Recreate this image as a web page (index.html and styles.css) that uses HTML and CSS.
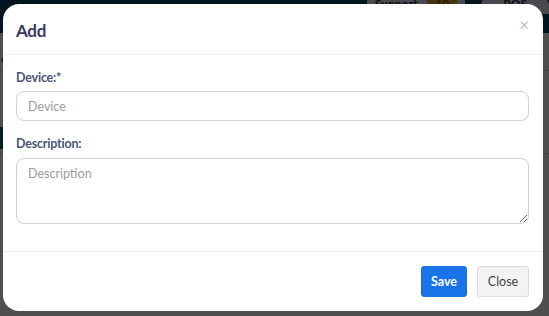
FILE: index.html
```html
<!DOCTYPE html>
<html>
<head>
<meta charset="utf-8">
<link rel="stylesheet" href="styles.css">
</head>
<body>
<div class="page">
  <div class="topbar">
    <div class="spacer"></div>
    <div class="support">Support <span class="badge">10</span></div>
    <div class="pos">POS</div>
  </div>
  <div class="content">
    <div class="crumb">c</div>
    <div class="rule"></div>
    <div class="band"></div>
    <div class="rule2"></div>
  </div>
</div>
<div class="overlay"></div>
<div class="modal">
  <div class="modal-header">
    <h2 class="title">Add</h2>
    <span class="close-x">&times;</span>
  </div>
  <div class="modal-body">
    <label class="label">Device:*</label>
    <input class="field" type="text" placeholder="Device">
    <label class="label label-gap">Description:</label>
    <textarea class="field area" placeholder="Description"></textarea>
  </div>
  <div class="modal-footer">
    <button class="btn btn-save">Save</button>
    <button class="btn btn-close">Close</button>
  </div>
</div>
</body>
</html>
```
FILE: styles.css
```css
* { box-sizing: border-box; }
html, body { margin: 0; padding: 0; }
body {
  width: 549px;
  height: 316px;
  overflow: hidden;
  font-family: Lato, "Liberation Sans", sans-serif;
  background: #ffffff;
  position: relative;
}
.page { width: 549px; height: 316px; background: #f4f4f4; }
.topbar {
  height: 33px;
  background: #0a4262;
  display: flex;
  align-items: flex-start;
  font-size: 12px;
  font-weight: 700;
  color: #1c2a44;
}
.spacer { flex: 1; }
.support {
  background: #dfe6ee;
  border-radius: 6px;
  padding: 0 8px;
  height: 18px;
  margin-top: -4px;
  line-height: 16px;
  margin-right: 16px;
  display: flex;
  gap: 10px;
}
.badge { background: #d6a52a; color: #7a5208; padding: 0 8px; border-radius: 4px; }
.pos { background: #dfe6ee; border-radius: 10px 10px 0 0; padding: 0 22px; height: 18px; margin-top: -4px; line-height: 16px; }
.content { position: relative; height: 283px; }
.crumb { padding: 18px 0 0 1px; font-size: 12px; color: #333; }
.rule { height: 1px; background: #ccc; margin-top: 4px; }
.band { height: 22px; background: #0e5c80; margin-top: 56px; width: 30px; }
.rule2 { height: 1px; background: #ccc; margin-top: 4px; }
.overlay {
  position: absolute; inset: 0;
  background: rgba(0, 0, 0, 0.68);
}
.modal {
  position: absolute;
  left: 3px; top: 4px;
  width: 540px; height: 307px;
  background: #fff;
  border-radius: 16px;
  display: flex;
  flex-direction: column;
}
.modal-header {
  height: 51px;
  border-bottom: 1px solid #eceef1;
  display: flex;
  align-items: center;
  padding: 0 13px;
  justify-content: space-between;
}
.title {
  margin: 0;
  font-size: 17px;
  font-weight: 700;
  color: #3a3860;
  letter-spacing: -0.3px;
  padding-top: 2px;
}
.close-x {
  color: #b9bcc2;
  font-size: 17px;
  margin-top: -10px;
  margin-right: 1px;
}
.modal-body {
  flex: 1;
  padding: 15px 14px 0 13px;
  display: flex;
  flex-direction: column;
  border-bottom: 1px solid #eceef1;
}
.label {
  font-size: 12.5px;
  font-weight: 700;
  color: #4b5577;
  letter-spacing: -0.2px;
  margin-bottom: 6px;
}
.label-gap { margin-top: 15px; margin-bottom: 7px; }
.field {
  width: 513px;
  height: 30px;
  border: 1px solid #ced2db;
  border-radius: 8px;
  padding: 0 11px;
  font-family: Lato, "Liberation Sans", sans-serif;
  font-size: 12.5px;
  color: #333;
}
.field::placeholder { color: #9a9ca3; }
.area { height: 66px; padding-top: 7px; resize: vertical; }
.modal-footer {
  height: 59px;
  display: flex;
  justify-content: flex-end;
  align-items: center;
  gap: 10px;
  padding: 0 14px 0 0;
}
.btn {
  height: 31px;
  border-radius: 3px;
  font-family: Lato, "Liberation Sans", sans-serif;
  font-size: 12.5px;
}
.btn-save {
  width: 46px;
  background: #1a73e8;
  border: 1px solid #1a6fe0;
  color: #fff;
  font-weight: 700;
}
.btn-close {
  width: 52px;
  background: #f3f3f3;
  border: 1px solid #dcdcdc;
  color: #444;
}
```
